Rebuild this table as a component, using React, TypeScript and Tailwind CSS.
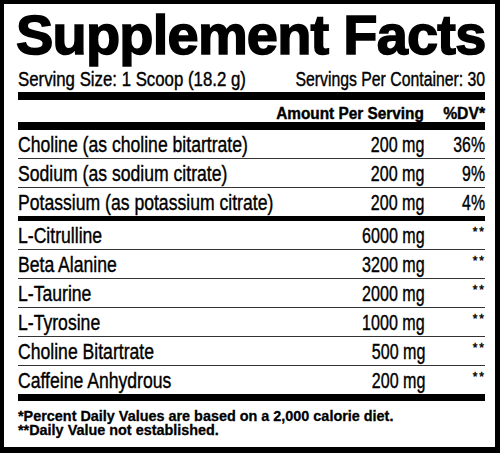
import React from 'react';

const rows1 = [
  { name: 'Choline (as choline bitartrate)', amt: '200 mg', dv: '36%' },
  { name: 'Sodium (as sodium citrate)', amt: '200 mg', dv: '9%' },
  { name: 'Potassium (as potassium citrate)', amt: '200 mg', dv: '4%' },
];

const rows2 = [
  { name: 'L-Citrulline', amt: '6000 mg' },
  { name: 'Beta Alanine', amt: '3200 mg' },
  { name: 'L-Taurine', amt: '2000 mg' },
  { name: 'L-Tyrosine', amt: '1000 mg' },
  { name: 'Choline Bitartrate', amt: '500 mg' },
  { name: 'Caffeine Anhydrous', amt: '200 mg' },
];

// Helvetica Condensed look: Liberation Sans squeezed horizontally
const Row = ({ name, amt, dv, last }: { name: string; amt: string; dv?: string; last?: boolean }) => (
  <div className={last ? '' : 'border-b-[1.5px] border-[#333]'}>
    <div className="flex items-start h-[28px] pt-[4px] text-[22px] leading-[22px] whitespace-nowrap [-webkit-text-stroke:0.4px_#000]">
      <span className="flex-1 min-w-0 origin-left scale-x-[0.8]">{name}</span>
      <span className="origin-right scale-x-[0.73]">{amt}</span>
      {dv ? (
        <span className="w-[61px] text-right origin-right scale-x-[0.72]">{dv}</span>
      ) : (
        <span className="w-[61px] text-right pt-[1px] text-[12px] leading-[12px] tracking-[2px] mr-[-1px]">**</span>
      )}
    </div>
  </div>
);

export default function App() {
  return (
    <div
      className="w-[500px] h-[453px] border-4 border-r-[5px] border-b-[6px] border-black bg-white pl-[14px] pr-[10px] text-black"
      style={{ fontFamily: '"Liberation Sans", Arial, sans-serif' }}
    >
      <h1 className="mt-[1px] text-[56px] leading-[60px] font-black tracking-[-0.8px] whitespace-nowrap ml-[-2px] [-webkit-text-stroke:1.5px_#000]">
        Supplement Facts
      </h1>
      <div className="flex h-[27px] pt-[3px] text-[20px] leading-[22px] whitespace-nowrap [-webkit-text-stroke:0.4px_#000]">
        <div className="flex w-1/2 justify-start">
          <span className="shrink-0 origin-left scale-x-[0.84]">Serving Size: 1 Scoop (18.2 g)</span>
        </div>
        <div className="flex w-1/2 justify-end">
          <span className="shrink-0 origin-right scale-x-[0.79]">Servings Per Container: 30</span>
        </div>
      </div>
      <div className="h-[8px] bg-black" />
      <div className="flex items-start justify-end h-[22px] pt-[5.5px] font-bold text-[16px] leading-[16px] whitespace-nowrap [-webkit-text-stroke:0.4px_#000]">
        <span className="origin-right scale-x-[0.96]">Amount Per Serving</span>
        <span className="w-[61px] text-right origin-right scale-x-[0.98]">%DV*</span>
      </div>
      <div className="h-[8px] bg-black" />
      {rows1.map((r, i) => (
        <Row key={i} {...r} last={i === rows1.length - 1} />
      ))}
      <div className="h-[5px] bg-black" />
      {rows2.map((r, i) => (
        <Row key={i} {...r} last={i === rows2.length - 1} />
      ))}
      <div className="h-[7px] bg-black" />
      <div className="pt-[7.5px] font-bold text-[15px] leading-[14px] whitespace-nowrap [-webkit-text-stroke:0.3px_#000]">
        <p className="origin-left scale-x-[0.96]">*Percent Daily Values are based on a 2,000 calorie diet.</p>
        <p className="origin-left scale-x-[0.96]">**Daily Value not established.</p>
      </div>
    </div>
  );
}
